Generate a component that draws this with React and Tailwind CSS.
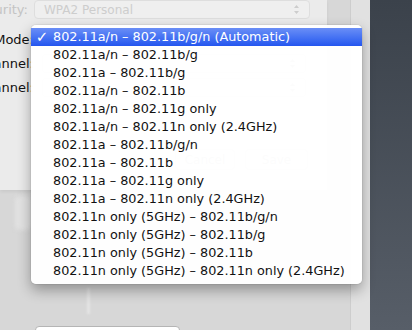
const modes = [
  '802.11a/n – 802.11b/g/n (Automatic)',
  '802.11a/n – 802.11b/g',
  '802.11a – 802.11b/g',
  '802.11a/n – 802.11b',
  '802.11a/n – 802.11g only',
  '802.11a/n – 802.11n only (2.4GHz)',
  '802.11a – 802.11b/g/n',
  '802.11a – 802.11b',
  '802.11a – 802.11g only',
  '802.11a – 802.11n only (2.4GHz)',
  '802.11n only (5GHz) – 802.11b/g/n',
  '802.11n only (5GHz) – 802.11b/g',
  '802.11n only (5GHz) – 802.11b',
  '802.11n only (5GHz) – 802.11n only (2.4GHz)',
]

function Arrows({ className }) {
  return (
    <svg width="7" height="11" viewBox="0 0 7 11" className={className}>
      <path d="M3.5 1 L6 4 H1 Z M3.5 10 L6 7 H1 Z" fill="currentColor" />
    </svg>
  )
}

function Popup({ label, className, dim }) {
  return (
    <div
      className={`flex items-center justify-between h-[19px] rounded-[4px] border px-[9px] ${
        dim ? 'border-[#dedede] bg-[#efefef] text-[#cdcdcd]' : 'border-[#c8c8c8] bg-[#f6f6f6] text-[#333]'
      } ${className}`}
    >
      <span className="text-[12px] leading-none">{label}</span>
      <Arrows />
    </div>
  )
}

function FormRow({ label, dim, children, className, labelClass = 'w-[34px]' }) {
  return (
    <div className={`flex items-center ${className}`}>
      <div className={`flex justify-end whitespace-nowrap ${labelClass}`}>
        <span className={`text-[13px] leading-none ${dim ? 'text-[#c4c4c4]' : 'text-[#111]'}`}>{label}</span>
      </div>
      {children}
    </div>
  )
}

export default function App() {
  return (
    <div className="relative w-[412px] h-[330px] overflow-hidden flex font-['DejaVu_Sans',sans-serif] bg-[#d7d7d7]">
      {/* window behind */}
      <div className="w-[350px] flex flex-col">
        {/* sheet */}
        <div className="w-[327px] h-[190px] shrink-0 bg-[#ebebeb] flex flex-col shadow-[0_2px_3px_rgba(0,0,0,0.06)]">
          <div className="ml-[45px] mt-[-9px] w-[12px] h-[12px] shrink-0 rounded-[3px] border border-[#d2d2d2] bg-[#f4f4f4]" />
          <FormRow label="Security:" dim className="mt-[-3px]" labelClass="w-[28px]">
            <Popup label="WPA2 Personal" dim className="w-[276px] ml-[6px]" />
          </FormRow>
          <FormRow label="Mode:" className="mt-[11px]">
            <Popup label="" className="w-[264px] ml-[8px]" />
          </FormRow>
          <FormRow label="Channel:" className="mt-[5px]">
            <Popup label="" className="w-[264px] ml-[8px]" />
          </FormRow>
          <FormRow label="Channel:" className="mt-[5px]">
            <Popup label="" className="w-[264px] ml-[8px]" />
          </FormRow>
          <div className="flex justify-end gap-[10px] mr-[19px] mt-[52px]">
            <div className="w-[60px] h-[21px] rounded-[4px] border border-[#b8b8b8] bg-white flex items-center justify-center text-[12px] text-[#222]">
              Cancel
            </div>
            <div className="w-[63px] h-[21px] rounded-[4px] border border-[#b8b8b8] bg-white flex items-center justify-center text-[12px] text-[#222]">
              Save
            </div>
          </div>
        </div>
        {/* below the sheet */}
        <div className="flex-1 flex flex-col">
          <div className="ml-[15px] mt-[6px] w-[16px] h-[34px] shrink-0 rounded-[5px] bg-[#e2e2e2] blur-[2px]" />
          <div className="ml-[87px] mt-[58px] w-[3px] h-[26px] shrink-0 bg-[#e4e4e4] blur-[1px]" />
          <div className="ml-[35px] mt-[12px] w-[145px] h-[12px] shrink-0 rounded-[4px] border border-[#b5b5b5] bg-white" />
        </div>
      </div>
      <div className="w-[20px] bg-[#e1e1e1] border-l border-[#cdcdcd]" />
      <div className="flex-1 bg-gradient-to-b from-[#3b424b] to-[#575e68]" />

      {/* popup menu */}
      <div className="absolute left-[31px] top-[25px] w-[331px] pt-[3px] pb-[4px] rounded-[5px] bg-white/[0.985] shadow-[0_6px_14px_rgba(0,0,0,0.33),0_0_0_1px_rgba(0,0,0,0.05)]">
        {modes.map((m, i) => (
          <div
            key={m}
            className={`flex items-center h-[18px] leading-[18px] text-[12.8px] ${
              i === 0 ? 'bg-gradient-to-b from-[#6a8ef6] to-[#2455ef] text-white' : 'text-[#111]'
            }`}
          >
            <span className="w-[22px] text-center text-[15px] font-bold">{i === 0 ? '✓' : ''}</span>
            <span className="whitespace-nowrap">{m}</span>
          </div>
        ))}
      </div>
    </div>
  )
}
